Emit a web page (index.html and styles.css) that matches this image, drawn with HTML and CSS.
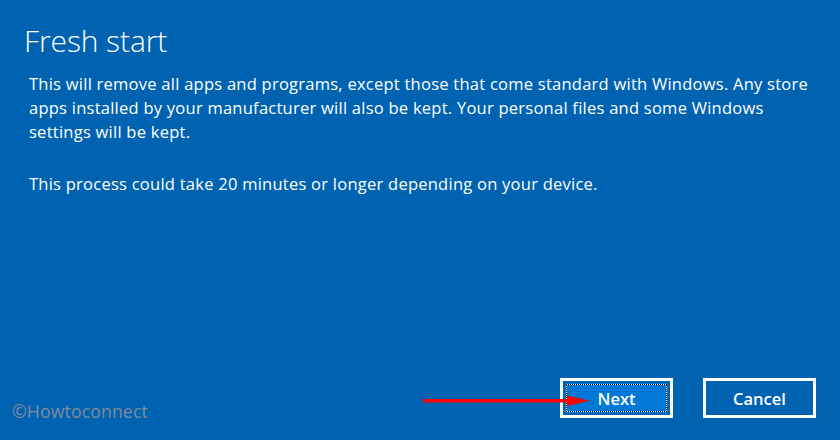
FILE: index.html
```html
<!DOCTYPE html>
<html>
<head>
<meta charset="utf-8">
<link rel="stylesheet" href="styles.css">
</head>
<body>
<div class="page">
  <h1 class="title">Fresh start</h1>
  <div class="content">
    <p class="para">This will remove all apps and programs, except those that come standard with Windows. Any store<br>apps installed by your manufacturer will also be kept. Your personal files and some Windows<br>settings will be kept.</p>
    <p class="para">This process could take 20 minutes or longer depending on your device.</p>
  </div>
  <div class="actions">
    <button class="btn btn-primary"><span class="btn-inner">Next</span></button>
    <button class="btn btn-secondary">Cancel</button>
  </div>
  <div class="watermark">©Howtoconnect</div>
  <svg class="arrow" width="170" height="14" viewBox="0 0 170 14">
    <rect x="0" y="5" width="150" height="3.5" fill="#ff0000"/>
    <polygon points="144,1.5 167,6.8 144,12" fill="#ff0000"/>
  </svg>
</div>
</body>
</html>
```
FILE: styles.css
```css
html, body {
  margin: 0;
  padding: 0;
}
body {
  background: #0063b1;
  width: 840px;
  height: 440px;
  overflow: hidden;
}
.page {
  position: relative;
  box-sizing: border-box;
  width: 840px;
  height: 440px;
  display: flex;
  flex-direction: column;
  padding: 20px 24px 22px 24px;
  color: #ffffff;
}
.title {
  margin: 0;
  font-family: "Open Sans", "Noto Sans", sans-serif;
  font-weight: 300;
  font-size: 30px;
  line-height: 42px;
  letter-spacing: -0.1px;
}
.content {
  padding-left: 5px;
  margin-top: 10px;
  flex: 1;
}
.para {
  margin: 0 0 28px 0;
  font-family: "Open Sans", "Noto Sans", sans-serif;
  font-size: 16.5px;
  line-height: 24px;
  letter-spacing: 0.25px;
  white-space: nowrap;
}
.actions {
  display: flex;
  justify-content: flex-end;
  gap: 30px;
}
.btn {
  box-sizing: border-box;
  width: 113px;
  height: 40px;
  border: 3px solid #ffffff;
  background: transparent;
  color: #ffffff;
  font-family: "Open Sans", "Noto Sans", sans-serif;
  font-weight: 600;
  font-size: 16.5px;
  padding: 0;
  margin: 0;
  display: flex;
  align-items: center;
  justify-content: center;
}
.btn-primary {
  padding: 2px;
}
.btn-inner {
  position: relative;
  width: 100%;
  height: 100%;
  background: #0078d7;
  display: flex;
  align-items: center;
  justify-content: center;
}
.btn-inner::before,
.btn-inner::after {
  content: "";
  position: absolute;
  left: 1px;
  top: 1px;
  right: 1px;
  bottom: 1px;
}
.btn-inner::before {
  border: 1px solid #ffffff;
}
.btn-inner::after {
  border: 1px dotted #000000;
}
.watermark {
  position: absolute;
  left: 12px;
  top: 399px;
  font-family: "Open Sans", "Noto Sans", sans-serif;
  font-size: 17.7px;
  color: #808a9a;
  letter-spacing: 0.1px;
}
.arrow {
  position: absolute;
  left: 423px;
  top: 394px;
}
```
